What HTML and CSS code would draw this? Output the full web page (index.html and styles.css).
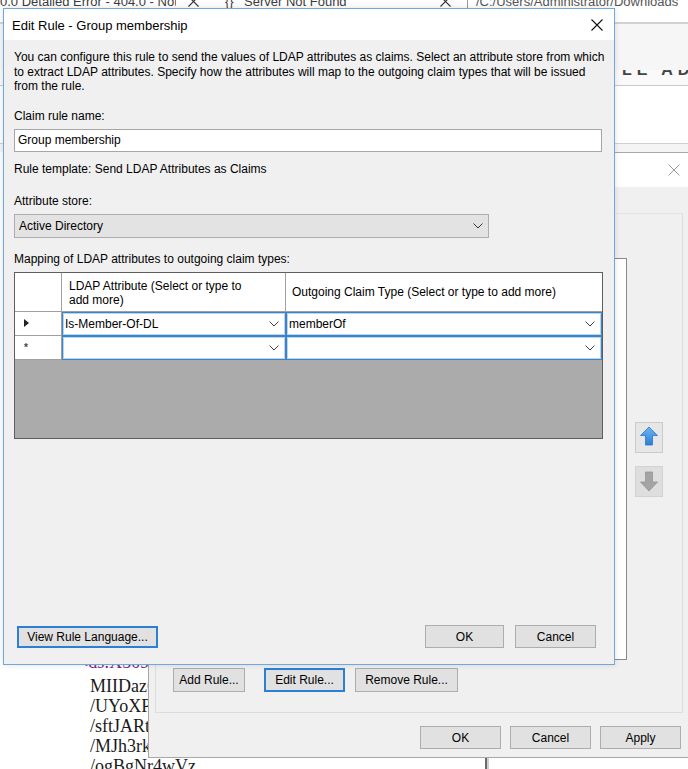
FILE: index.html
```html
<!DOCTYPE html>
<html>
<head>
<meta charset="utf-8">
<title>Edit Rule - Group membership</title>
<link rel="stylesheet" href="styles.css">
</head>
<body>
<div class="desktop">

  <div class="tabstrip">
    <div class="tabrow">
      <span class="tab1">0.0 Detailed Error - 404.0 - Not Found</span>
      <svg class="tabx" width="11" height="11" viewBox="0 0 11 11"><path d="M0.5 0.5 L10.5 10.5 M10.5 0.5 L0.5 10.5" stroke="#333" stroke-width="1.1" fill="none"/></svg>
      <span class="tab2icon">{}</span>
      <span class="tab2">Server Not Found</span>
      <svg class="tabx2" width="11" height="11" viewBox="0 0 11 11"><path d="M0.5 0.5 L10.5 10.5 M10.5 0.5 L0.5 10.5" stroke="#333" stroke-width="1.1" fill="none"/></svg>
      <span class="tabsep"></span>
      <span class="addr">/C:/Users/Administrator/Downloads</span>
    </div>
  </div>

  <div class="chrome">
    <div class="band a"></div>
    <div class="band b"></div>
    <div class="band c"></div>
    <div class="band d"><span class="frag">LE ADD</span></div>
    <div class="band e"></div>
    <div class="band f"></div>
    <div class="band g"></div>
    <div class="band h"></div>
  </div>

  <div class="pagetext">
    <div class="pline tag">&lt;ds:X509C</div>
    <div class="pline">MIIDazC</div>
    <div class="pline">/UYoXPz</div>
    <div class="pline">/sftJARt</div>
    <div class="pline">/MJh3rkq</div>
    <div class="pline last">/ogBgNr4wVz</div>
  </div>
  <div class="pagerule"></div>

  <div class="bgdlg">
    <div class="bg-title">
      <svg class="bg-close" width="12" height="12" viewBox="0 0 12 12"><path d="M0.5 0.5 L11.5 11.5 M11.5 0.5 L0.5 11.5" stroke="#9a9a9a" stroke-width="1" fill="none"/></svg>
    </div>
    <div class="bg-body">
      <div class="tabpanel">
        <div class="panel-main">
          <div class="rulelist"></div>
          <div class="arrows">
            <div class="arrbtn up">
              <svg width="28" height="31" viewBox="0 0 28 31">
                <defs>
                  <linearGradient id="gup" x1="0" y1="0" x2="0" y2="1">
                    <stop offset="0" stop-color="#6cb6f0"/>
                    <stop offset="1" stop-color="#2a7ed6"/>
                  </linearGradient>
                </defs>
                <path d="M14 5 L22.5 13.5 L17.5 13.5 L17.5 23 L10.5 23 L10.5 13.5 L5.5 13.5 Z" fill="url(#gup)" stroke="#2c74c4" stroke-width="0.8" stroke-linejoin="round"/>
              </svg>
            </div>
            <div class="arrbtn down">
              <svg width="28" height="31" viewBox="0 0 28 31">
                <path d="M10.5 6 L17.5 6 L17.5 16 L22.5 16 L14 25 L5.5 16 L10.5 16 Z" fill="#a4a4a4" stroke="#969696" stroke-width="0.8" stroke-linejoin="round"/>
              </svg>
            </div>
          </div>
        </div>
        <div class="rulebtns">
          <div class="btn add">Add Rule...</div>
          <div class="btn edit focus">Edit Rule...</div>
          <div class="btn remove">Remove Rule...</div>
        </div>
      </div>
      <div class="bg-foot">
        <div class="btn fbtn">OK</div>
        <div class="btn fbtn">Cancel</div>
        <div class="btn fbtn">Apply</div>
      </div>
    </div>
  </div>

  <div class="dlg">
    <div class="dlg-title">
      <span class="title-text">Edit Rule - Group membership</span>
      <svg class="close" width="12" height="12" viewBox="0 0 12 12"><path d="M0.5 0.5 L11.5 11.5 M11.5 0.5 L0.5 11.5" stroke="#111" stroke-width="1.1" fill="none"/></svg>
    </div>
    <div class="dlg-body">
      <p class="desc">You can configure this rule to send the values of LDAP attributes as claims. Select an attribute store from which<br>to extract LDAP attributes. Specify how the attributes will map to the outgoing claim types that will be issued<br>from the rule.</p>
      <div class="lbl l-name">Claim rule name:</div>
      <div class="textbox">Group membership</div>
      <div class="lbl l-tmpl">Rule template: Send LDAP Attributes as Claims</div>
      <div class="lbl l-store">Attribute store:</div>
      <div class="combo">
        <span>Active Directory</span>
        <svg class="chev" width="10" height="6" viewBox="0 0 10 6"><path d="M0.5 0.5 L5 5 L9.5 0.5" stroke="#333" stroke-width="1" fill="none"/></svg>
      </div>
      <div class="lbl l-map">Mapping of LDAP attributes to outgoing claim types:</div>
      <div class="grid">
        <div class="grow ghead">
          <div class="rh"></div>
          <div class="c1 htext two">LDAP Attribute (Select or type to<br>add more)</div>
          <div class="c2 htext">Outgoing Claim Type (Select or type to add more)</div>
        </div>
        <div class="grow gr gr1">
          <div class="rh"><span class="cur"></span></div>
          <div class="c1"><div class="cellbox"><span>Is-Member-Of-DL</span><svg class="chev" width="10" height="6" viewBox="0 0 10 6"><path d="M0.5 0.5 L5 5 L9.5 0.5" stroke="#444" stroke-width="1" fill="none"/></svg></div></div>
          <div class="c2"><div class="cellbox"><span>memberOf</span><svg class="chev" width="10" height="6" viewBox="0 0 10 6"><path d="M0.5 0.5 L5 5 L9.5 0.5" stroke="#444" stroke-width="1" fill="none"/></svg></div></div>
        </div>
        <div class="grow gr gr2">
          <div class="rh"><span class="star">*</span></div>
          <div class="c1"><div class="cellbox"><span></span><svg class="chev" width="10" height="6" viewBox="0 0 10 6"><path d="M0.5 0.5 L5 5 L9.5 0.5" stroke="#444" stroke-width="1" fill="none"/></svg></div></div>
          <div class="c2"><div class="cellbox"><span></span><svg class="chev" width="10" height="6" viewBox="0 0 10 6"><path d="M0.5 0.5 L5 5 L9.5 0.5" stroke="#444" stroke-width="1" fill="none"/></svg></div></div>
        </div>
        <div class="gempty"></div>
      </div>
      <div class="dlg-foot">
        <div class="btn focus viewbtn">View Rule Language...</div>
        <div class="spacer"></div>
        <div class="btn okbtn">OK</div>
        <div class="btn cancelbtn">Cancel</div>
      </div>
    </div>
  </div>

</div>
</body>
</html>
```

FILE: styles.css
```css
* { box-sizing: border-box; }
html, body { margin: 0; padding: 0; }
body {
  width: 688px;
  height: 769px;
  overflow: hidden;
  background: #ffffff;
  font-family: "Liberation Sans", Arial, sans-serif;
  font-size: 12px;
  color: #000;
}
.desktop { position: relative; width: 688px; height: 769px; overflow: hidden; background: #fff; }

/* ---------- browser tab strip (mostly cut off) ---------- */
.tabstrip { position: absolute; left: 0; top: 0; width: 688px; height: 8px; overflow: hidden; background: #fff; }
.tabrow {
  display: flex; align-items: center; height: 18px; margin-top: -8px;
  font-size: 13px; color: #3c3c3c; white-space: nowrap;
}
.tab1 { width: 176px; overflow: hidden; flex: none; }
.tabx { flex: none; margin-left: 12px; }
.tab2icon { margin-left: 26px; flex: none; width: 19px; }
.tab2 { flex: none; width: 196px; }
.tabx2 { flex: none; }
.tabsep { flex: none; width: 1px; height: 18px; background: #999; margin-left: 16px; }
.addr { flex: none; margin-left: 8px; color: #555; }

/* ---------- browser chrome to the right ---------- */
.chrome { position: absolute; left: 0; top: 8px; width: 688px; height: 144px; display: flex; flex-direction: column; }
.band { flex: none; }
.band.a { height: 14px; background: #fff; }
.band.b { height: 2px; background: #d2d2d2; }
.band.c { height: 46px; background: #f6f6f6; }
.band.d { height: 15px; background: #fafafa; overflow: hidden; padding-left: 622px; }
.frag { display: block; font-size: 16px; font-weight: bold; letter-spacing: 5px; color: #444; margin-top: -9px; white-space: nowrap; }
.band.e { height: 1px; background: #c8c8c8; }
.band.f { height: 57px; background: #fff; }
.band.g { height: 1px; background: #cfcfcf; }
.band.h { height: 8px; background: #f4f4f4; }

/* ---------- page text (xml) ---------- */
.pagetext {
  position: absolute; left: 75px; top: 652px; width: 125px; overflow: hidden;
  font-family: "Liberation Serif", "Times New Roman", serif; font-size: 18px; line-height: 20px; color: #1a1a1a;
  white-space: nowrap;
}
.pline { height: 20px; width: 73px; overflow: hidden; padding-left: 15px; }
.pline.tag { padding-left: 3px; color: #7a2a86; height: 24px; line-height: 20px; }
.pline.last { width: 125px; }
.pagerule { position: absolute; left: 485px; top: 757px; width: 2px; height: 12px; background: #6a6a6a; box-shadow: 2px 0 0 #cfcfcf; }

/* ---------- generic buttons ---------- */
.btn {
  display: flex; align-items: center; justify-content: center;
  background: #e1e1e1; border: 1px solid #adadad;
  font-size: 12px; color: #000; white-space: nowrap; flex: none;
}
.btn.focus { border: 1px solid #2b7fd4; box-shadow: inset 0 0 0 1px #2b7fd4; }

/* ---------- background dialog ---------- */
.bgdlg {
  position: absolute; left: 148px; top: 152px; width: 545px; height: 606px;
  border: 1px solid #a8a8a8; background: #f0f0f0;
  display: flex; flex-direction: column;
}
.bg-title { height: 34px; background: #fff; position: relative; flex: none; }
.bg-close { position: absolute; left: 519px; top: 11px; }
.bg-body { flex: 1; display: flex; flex-direction: column; padding-top: 26px; }
.tabpanel {
  margin-left: 6px; width: 528px; height: 500px;
  border: 1px solid #dcdcdc; border-top-color: #e4e4e4;
  background: #f0f0f0; padding: 44px 0 0 14px;
  display: flex; flex-direction: column;
}
.panel-main { display: flex; }
.rulelist { width: 457px; height: 402px; background: #fff; border: 1px solid #8a8a8a; }
.arrows { margin-left: 8px; display: flex; flex-direction: column; }
.arrbtn { width: 28px; height: 31px; border: 1px solid #cbcbcb; background: #e6e6e6; }
.arrbtn svg { display: block; margin: -1px; }
.arrbtn.up { margin-top: 164px; }
.arrbtn.down { margin-top: 13px; background: #dedede; border-color: #d2d2d2; }
.rulebtns { display: flex; margin-top: 8px; }
.rulebtns .btn { height: 24px; }
.btn.add { margin-left: 3px; width: 72px; }
.btn.edit { margin-left: 19px; width: 81px; }
.btn.remove { margin-left: 10px; width: 103px; }
.bg-foot { display: flex; justify-content: flex-end; gap: 9px; padding-right: 11px; margin-top: 13px; }
.fbtn { width: 81px; height: 23px; }

/* ---------- front dialog ---------- */
.dlg {
  position: absolute; left: 3px; top: 8px; width: 612px; height: 657px;
  border: 1px solid #6fa8dc; background: #f0f0f0;
  display: flex; flex-direction: column;
  box-shadow: 0 0 6px rgba(0,0,0,0.12);
}
.dlg-title {
  height: 31px; background: #fff; flex: none;
  display: flex; align-items: center; padding-left: 8px; padding-right: 11px;
}
.title-text { font-size: 13px; flex: 1; padding-top: 1px; }
.close { flex: none; }
.dlg-body { flex: 1; display: flex; flex-direction: column; padding: 10px 12px 16px 10px; }
.desc { margin: 0; line-height: 14.5px; white-space: nowrap; }
.lbl { line-height: 14px; white-space: nowrap; }
.l-name { margin-top: 15px; }
.textbox {
  margin-top: 6px; height: 23px; width: 588px; background: #fff; border: 1px solid #a6a6a6;
  display: flex; align-items: center; padding-left: 3px; font-size: 12px;
}
.l-tmpl { margin-top: 10px; }
.l-store { margin-top: 18px; }
.combo {
  margin-top: 6px; height: 24px; width: 475px; background: #e3e3e3; border: 1px solid #adadad;
  display: flex; align-items: center; padding: 0 5px 0 4px; font-size: 12px;
}
.combo span { flex: 1; }
.chev { flex: none; display: block; }
.l-map { margin-top: 14px; }

.grid {
  margin-top: 6px; width: 589px; height: 167px; border: 1px solid #5e5e5e; background: #ababab;
  display: flex; flex-direction: column;
}
.grow { display: flex; flex: none; background: #fff; }
.ghead { height: 39px; border-bottom: 1px solid #a0a0a0; }
.gr { height: 24px; }
.rh { width: 47px; flex: none; border-right: 1px solid #a0a0a0; display: flex; align-items: center; }
.gr .rh { border-bottom: 1px solid #a0a0a0; }
.c1 { width: 224px; flex: none; border-right: 1px solid #a0a0a0; }
.c2 { flex: 1; }
.htext { display: flex; align-items: center; padding-left: 6px; line-height: 14px; white-space: nowrap; }
.htext.two { align-items: flex-start; padding-top: 6px; padding-left: 7px; }
.cellbox {
  height: 100%; display: flex; align-items: center; background: #fff;
  border: 1px solid #3d83c9; box-shadow: inset 0 0 0 1px #b9d5f0;
  padding: 0 6px 0 2px; font-size: 12px;
}
.c1 .cellbox { margin-right: -1px; }
.cellbox span { flex: 1; }
.cur {
  display: block; width: 0; height: 0; margin-left: 9px;
  border-top: 4.5px solid transparent; border-bottom: 4.5px solid transparent; border-left: 5px solid #222;
}
.star { margin-left: 9px; font-size: 10px; font-weight: bold; color: #444; line-height: 10px; padding-top: 2px; }
.gempty { flex: 1; background: #ababab; }

.dlg-foot { margin-top: auto; display: flex; align-items: center; }
.viewbtn { width: 141px; height: 22px; margin-left: 3px; margin-top: 1px; }
.spacer { flex: 1; }
.okbtn { width: 79px; height: 23px; }
.cancelbtn { width: 81px; height: 23px; margin-left: 11px; margin-right: 6px; }
```
